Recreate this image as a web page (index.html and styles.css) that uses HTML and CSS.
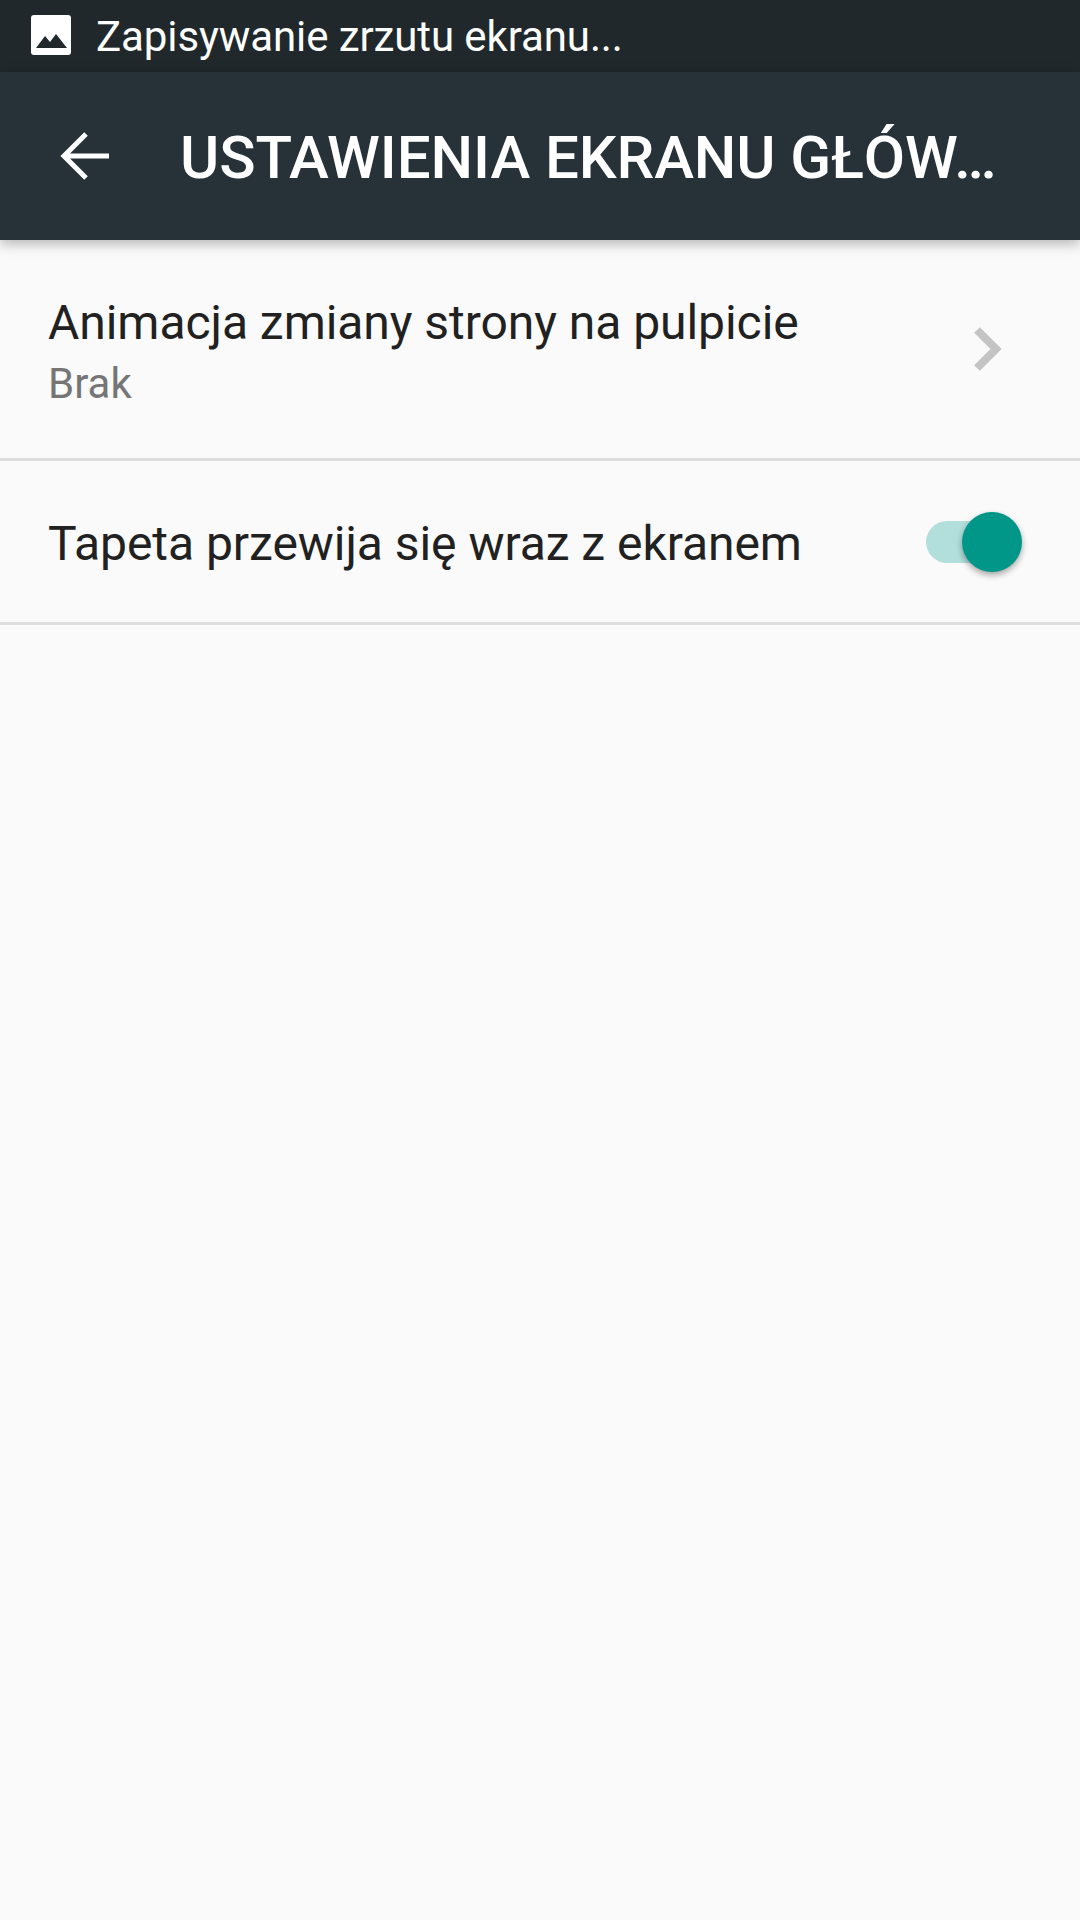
FILE: index.html
```html
<!DOCTYPE html>
<html lang="pl">

<head>
    <meta charset="UTF-8">
    <title>Ustawienia ekranu głównego</title>
    <link rel="stylesheet" href="styles.css">
</head>

<body>
    <div class="status">
        <svg class="status_icon" viewBox="0 0 40 40">
            <rect width="40" height="40" rx="3" fill="#fff" />
            <path d="M5 33 L14 21 L19 27 L25 19 L36 33 Z" fill="#20282c" />
        </svg>
        <span class="status_text">Zapisywanie zrzutu ekranu...</span>
    </div>
    <div class="toolbar">
        <svg class="back" viewBox="0 0 49 48">
            <path d="M26 2 L4 24 L26 46 M4 24 H49" fill="none" stroke="#fff" stroke-width="5" />
        </svg>
        <h1 class="title">USTAWIENIA EKRANU GŁÓW…</h1>
    </div>
    <div class="row row_first">
        <div class="row_text">
            <div class="row_title">Animacja zmiany strony na pulpicie</div>
            <div class="row_sub">Brak</div>
        </div>
        <svg class="chevron" viewBox="0 0 28 44">
            <path d="M3 3 L22 22 L3 41" fill="none" stroke="#c4c4c4" stroke-width="8" />
        </svg>
    </div>
    <div class="row row_second">
        <div class="row_text">
            <div class="row_title">Tapeta przewija się wraz z ekranem</div>
        </div>
        <div class="switch">
            <div class="knob"></div>
        </div>
    </div>
</body>

</html>
```

FILE: styles.css
```css
body {
    margin: 0;
    height: 1920px;
    overflow: hidden;
    background-color: #fafafa;
    font-family: Roboto, sans-serif;
}

.status {
    height: 72px;
    display: flex;
    align-items: center;
    padding-left: 31px;
    background-color: #20282c;
    color: #fff;
}

.status_icon {
    width: 40px;
    height: 40px;
    margin-top: -3px;
}

.status_text {
    margin-left: 25px;
    font-size: 42px;
    letter-spacing: -0.1px;
}

.toolbar {
    height: 168px;
    display: flex;
    align-items: center;
    padding-left: 60px;
    background-color: #263238;
    box-shadow: 0 4px 12px rgba(0, 0, 0, 0.28);
    position: relative;
}

.back {
    width: 49px;
    height: 48px;
    flex: none;
}

.title {
    margin: 2px 0 0 71px;
    font-size: 60px;
    font-weight: 500;
    letter-spacing: -0.1px;
    color: #fff;
    white-space: nowrap;
}

.row {
    display: flex;
    align-items: center;
    justify-content: space-between;
    padding-left: 48px;
    border-bottom: 3px solid #dedede;
}

.row_first {
    height: 218px;
}

.row_second {
    height: 161px;
}

.row_title {
    font-size: 48px;
    letter-spacing: -0.05px;
    color: #212121;
}

.row_first .row_text {
    margin-top: 4px;
}

.row_second .row_text {
    margin-top: 3px;
}

.row_sub {
    margin-top: 8px;
    font-size: 42px;
    color: #757575;
}

.chevron {
    width: 28px;
    height: 44px;
    margin-right: 78px;
}

.switch {
    width: 90px;
    height: 42px;
    margin-right: 64px;
    border-radius: 21px;
    background-color: #b2dfdb;
    position: relative;
}

.knob {
    width: 60px;
    height: 60px;
    border-radius: 50%;
    background-color: #009688;
    box-shadow: 0 3px 6px rgba(0, 0, 0, 0.35);
    position: absolute;
    top: -9px;
    right: -6px;
}
```
